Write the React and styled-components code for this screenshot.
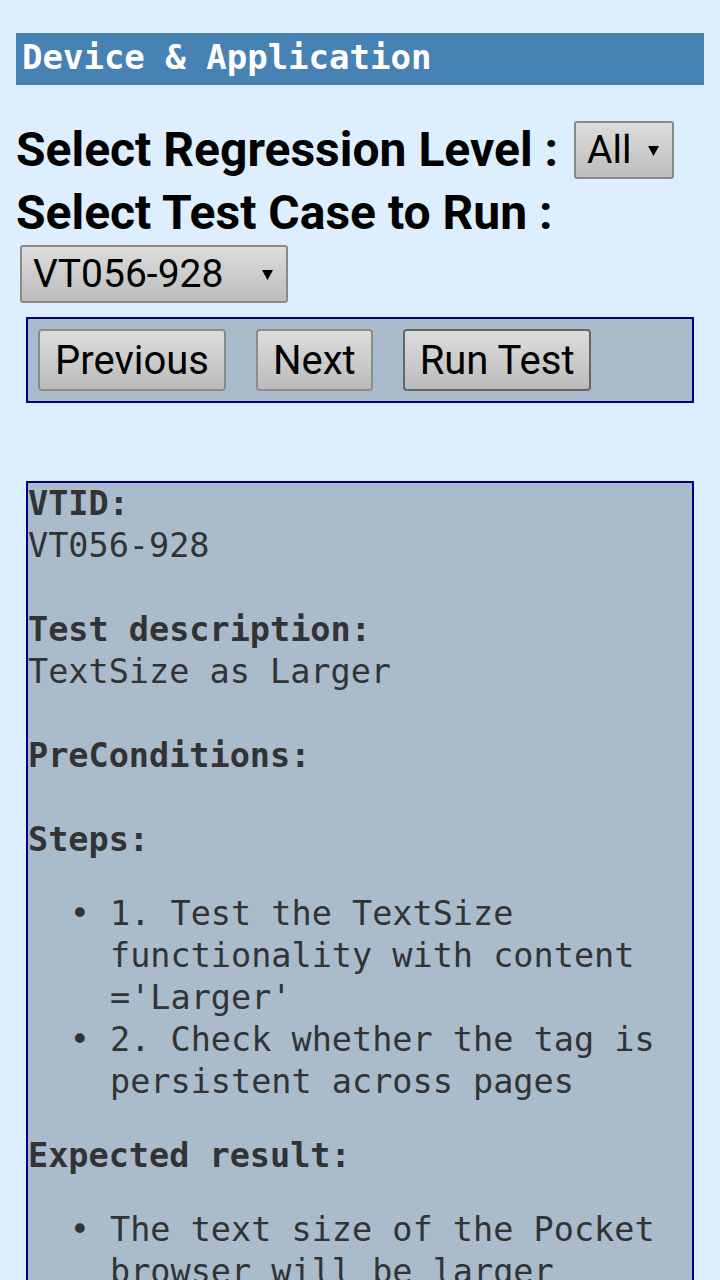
import React from "react";
import styled, { createGlobalStyle } from "styled-components";

const GlobalStyle = createGlobalStyle`
  html, body {
    margin: 0;
    padding: 0;
    background: #ddeeff;
  }
  body {
    font-family: "Roboto", "Liberation Sans", sans-serif;
  }
`;

const Page = styled.div`
  padding: 33px 16px 0 16px;
  min-height: 1280px;
  box-sizing: border-box;
`;

const TitleBar = styled.h1`
  margin: 0;
  height: 52px;
  line-height: 48px;
  padding: 0 6px;
  background: #4682b4;
  color: #ffffff;
  font-family: "DejaVu Sans Mono", monospace;
  font-size: 34px;
  font-weight: bold;
`;

const SelectRow = styled.div`
  display: flex;
  align-items: center;
  gap: 16px;
  margin-top: ${(p) => p.$top || 0}px;
`;

const Label = styled.span`
  font-family: "Roboto", "Liberation Sans", sans-serif;
  font-size: 48px;
  font-weight: bold;
  color: #000;
  line-height: 56px;
  white-space: nowrap;
`;

const SelectBox = styled.div`
  display: flex;
  align-items: center;
  justify-content: space-between;
  box-sizing: border-box;
  width: ${(p) => p.$width}px;
  height: 58px;
  margin-left: ${(p) => p.$left || 0}px;
  margin-top: ${(p) => p.$top || 0}px;
  padding: 0 13px 0 11px;
  border: 2px solid #8a8a8a;
  border-radius: 3px;
  background: linear-gradient(#dcdcdc, #bdbdbd);
  font-family: "Roboto", "Liberation Sans", sans-serif;
  font-size: 39px;
  color: #000;
`;

const Arrow = () => (
  <svg width="11" height="11" viewBox="0 0 11 11">
    <polygon points="0,1 11,1 5.5,11" fill="#000" />
  </svg>
);

const ButtonPanel = styled.div`
  display: flex;
  gap: 30px;
  margin: 14px 10px 0 10px;
  padding: 10px;
  border: 2px solid #000080;
  background: #aabbcc;
`;

const Button = styled.button`
  height: 62px;
  padding: 0 15px;
  border: 2px solid ${(p) => (p.$focused ? "#666666" : "#8c8c8c")};
  border-radius: 4px;
  background: linear-gradient(#dddddd, #bbbbbb);
  font-family: "Roboto", "Liberation Sans", sans-serif;
  font-size: 40px;
  color: #000;
  cursor: pointer;
`;

const DetailPanel = styled.div`
  margin: 78px 10px 0 10px;
  border: 2px solid #000080;
  border-bottom: none;
  background: #aabbcc;
  font-family: "DejaVu Sans Mono", monospace;
  font-size: 33.5px;
  line-height: 42px;
  color: #333333;
  padding-bottom: 60px;
`;

const Field = styled.div`
  margin-bottom: ${(p) => (p.$gap ? 42 : 0)}px;
`;

const StepList = styled.ul`
  margin: 32px 0;
  padding-left: 82px;
  list-style-type: "• ";
`;

export default function App() {
  return (
    <>
      <GlobalStyle />
      <Page>
        <TitleBar>Device &amp; Application</TitleBar>

        <SelectRow $top={36}>
          <Label>Select Regression Level :</Label>
          <SelectBox $width={100}>
            <span>All</span>
            <Arrow />
          </SelectBox>
        </SelectRow>
        <SelectRow $top={6}>
          <Label>Select Test Case to Run :</Label>
        </SelectRow>
        <SelectBox $width={268} $left={4} $top={4}>
          <span>VT056-928</span>
          <Arrow />
        </SelectBox>

        <ButtonPanel>
          <Button>Previous</Button>
          <Button>Next</Button>
          <Button $focused>Run Test</Button>
        </ButtonPanel>

        <DetailPanel>
          <Field $gap>
            <b>VTID:</b>
            <div>VT056-928</div>
          </Field>
          <Field $gap>
            <b>Test description:</b>
            <div>TextSize as Larger</div>
          </Field>
          <Field $gap>
            <b>PreConditions:</b>
          </Field>
          <Field>
            <b>Steps:</b>
            <StepList>
              <li>1. Test the TextSize functionality with content ='Larger'</li>
              <li>2. Check whether the tag is persistent across pages</li>
            </StepList>
          </Field>
          <Field>
            <b>Expected result:</b>
            <StepList>
              <li>The text size of the Pocket browser will be larger</li>
            </StepList>
          </Field>
        </DetailPanel>
      </Page>
    </>
  );
}
